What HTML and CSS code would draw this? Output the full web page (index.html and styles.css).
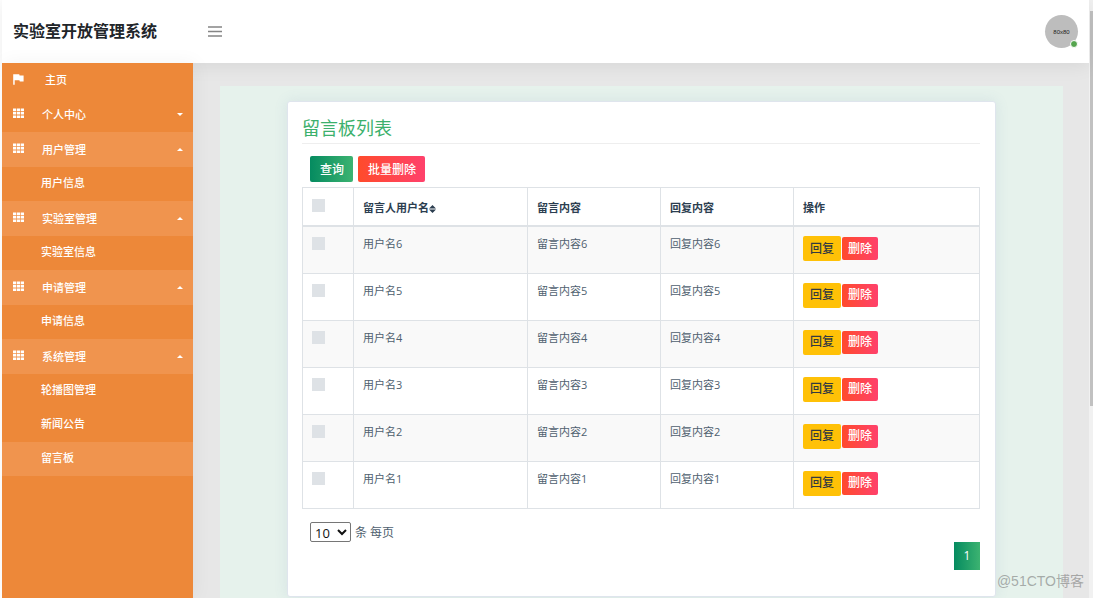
FILE: index.html
```html
<!DOCTYPE html>
<html lang="zh-CN">
<head>
<meta charset="utf-8">
<title>实验室开放管理系统</title>
<link rel="stylesheet" href="styles.css">
</head>
<body>
<svg class="defs" width="0" height="0" aria-hidden="true">
  <symbol id="grid" viewBox="0 0 11 10"><path d="M0 0h3.200v2.700H0zM3.900 0h3.200v2.700H3.900zM7.800 0H11v2.700H7.800zM0 3.400h3.200v2.700H0zM3.900 3.400h3.200v2.700H3.900zM7.800 3.400H11v2.700H7.800zM0 6.900h3.200v2.700H0zM3.900 6.900h3.200v2.700H3.900zM7.800 6.900H11v2.700H7.800z"/></symbol>
  <symbol id="flag" viewBox="0 0 11 11"><path d="M.2.300h6l.4 1.100h4v6H6.800l-.4-1.100H1.700v4.400H.2z"/></symbol>
  <symbol id="down" viewBox="0 0 6 3"><path d="M0 0h6L3 3z"/></symbol>
  <symbol id="up" viewBox="0 0 6 3"><path d="M0 3h6L3 0z"/></symbol>
</svg>
<div class="app">
  <header class="topbar">
    <h1 class="brand">实验室开放管理系统</h1>
    <button class="menu-toggle" type="button" aria-label="菜单"><svg width="14" height="11" viewBox="0 0 14 11"><path d="M0 1h14M0 5.500h14M0 10h14" stroke="#858585" stroke-width="1.400"/></svg></button>
    <a class="avatar" href="#">80x80<span class="status"></span></a>
  </header>
  <div class="body">
    <nav class="sidebar">
      <a class="item home" href="#"><svg class="icon"><use href="#flag"/></svg><span>主页</span></a>
      <a class="item parent" href="#"><svg class="icon"><use href="#grid"/></svg><span>个人中心</span><svg class="caret"><use href="#down"/></svg></a>
      <a class="item parent open" href="#"><svg class="icon"><use href="#grid"/></svg><span>用户管理</span><svg class="caret"><use href="#up"/></svg></a>
      <a class="item child" href="#">用户信息</a>
      <a class="item parent open" href="#"><svg class="icon"><use href="#grid"/></svg><span>实验室管理</span><svg class="caret"><use href="#up"/></svg></a>
      <a class="item child" href="#">实验室信息</a>
      <a class="item parent open" href="#"><svg class="icon"><use href="#grid"/></svg><span>申请管理</span><svg class="caret"><use href="#up"/></svg></a>
      <a class="item child" href="#">申请信息</a>
      <a class="item parent open" href="#"><svg class="icon"><use href="#grid"/></svg><span>系统管理</span><svg class="caret"><use href="#up"/></svg></a>
      <a class="item child" href="#">轮播图管理</a>
      <a class="item child" href="#">新闻公告</a>
      <a class="item child open" href="#">留言板</a>
    </nav>
    <main class="main">
      <div class="panel">
        <section class="card">
          <h2 class="title">留言板列表</h2>
          <div class="tools">
            <button class="btn green" type="button">查询</button>
            <button class="btn red" type="button">批量删除</button>
          </div>
          <table class="list">
            <colgroup><col class="c-check"><col class="c-user"><col class="c-text"><col class="c-text"><col></colgroup>
            <thead>
              <tr><th><input type="checkbox" aria-label="全选"></th><th>留言人用户名<svg class="sort" viewBox="0 0 7 8"><path d="M0 3.600h7L3.500 0zM0 4.400h7L3.500 8z"/></svg></th><th>留言内容</th><th>回复内容</th><th>操作</th></tr>
            </thead>
            <tbody>
              <tr><td><input type="checkbox" aria-label="选择用户名6"></td><td>用户名6</td><td>留言内容6</td><td>回复内容6</td><td><div class="ops"><button class="op reply" type="button">回复</button><button class="op red" type="button">删除</button></div></td></tr>
              <tr><td><input type="checkbox" aria-label="选择用户名5"></td><td>用户名5</td><td>留言内容5</td><td>回复内容5</td><td><div class="ops"><button class="op reply" type="button">回复</button><button class="op red" type="button">删除</button></div></td></tr>
              <tr><td><input type="checkbox" aria-label="选择用户名4"></td><td>用户名4</td><td>留言内容4</td><td>回复内容4</td><td><div class="ops"><button class="op reply" type="button">回复</button><button class="op red" type="button">删除</button></div></td></tr>
              <tr><td><input type="checkbox" aria-label="选择用户名3"></td><td>用户名3</td><td>留言内容3</td><td>回复内容3</td><td><div class="ops"><button class="op reply" type="button">回复</button><button class="op red" type="button">删除</button></div></td></tr>
              <tr><td><input type="checkbox" aria-label="选择用户名2"></td><td>用户名2</td><td>留言内容2</td><td>回复内容2</td><td><div class="ops"><button class="op reply" type="button">回复</button><button class="op red" type="button">删除</button></div></td></tr>
              <tr><td><input type="checkbox" aria-label="选择用户名1"></td><td>用户名1</td><td>留言内容1</td><td>回复内容1</td><td><div class="ops"><button class="op reply" type="button">回复</button><button class="op red" type="button">删除</button></div></td></tr>
            </tbody>
          </table>
          <div class="page-size"><select id="size"><option>10</option><option>20</option></select><label for="size">条 每页</label></div>
          <div class="pager"><button class="page" type="button">1</button></div>
        </section>
      </div>
    </main>
  </div>
</div>
<div class="scroll"><div class="thumb"></div></div>
<div class="watermark">@51CTO博客</div>
</body>
</html>
```
FILE: styles.css
```css
* { box-sizing: border-box; }
body {
  margin: 0;
  padding-left: 2px;
  min-height: 100vh;
  display: flex;
  background: #fff;
  color: #4f5f6f;
  font: 11px/18px "Open Sans", "Noto Sans CJK SC", sans-serif;
}
button, select, input { font: inherit; margin: 0; }
button { border: 0; cursor: pointer; }
a { color: inherit; text-decoration: none; }
.defs { position: absolute; }
.app { flex: 1; display: flex; flex-direction: column; min-width: 0; }
.topbar {
  position: relative;
  z-index: 1;
  display: flex;
  align-items: center;
  height: 63px;
  padding: 0 11px;
  background: #fff;
  box-shadow: 0 2px 18px rgba(0, 0, 0, .08);
}
.brand { margin: 0; padding-bottom: 2px; width: 195px; font-size: 16px; line-height: 24px; color: #212529; }
.menu-toggle { display: flex; padding: 0; background: none; }
.avatar {
  position: relative;
  display: flex;
  align-items: center;
  justify-content: center;
  margin-left: auto;
  width: 33px;
  height: 33px;
  border-radius: 50%;
  background: #bdbdbd;
  color: #222;
  font: 6px/8px "Liberation Sans", sans-serif;
}
.status {
  position: absolute;
  right: 0;
  bottom: 0;
  width: 8px;
  height: 8px;
  border: 1px solid #fff;
  border-radius: 50%;
  background: #55a54e;
}
.body { flex: 1; display: flex; }
.sidebar { position: relative; z-index: 2; width: 191px; background: #ed8839; color: #fff; font-weight: 500; box-shadow: 2px 0 18px rgba(0, 0, 0, .05); }
.item { display: flex; align-items: center; height: 34px; padding: 0 10px 0 11px; }
.parent { height: 35px; }
.open { background: #f0944e; }
.icon { width: 11px; height: 11px; margin: 0 18px 2px 0; fill: #fff; }
.home .icon { margin-right: 21px; }
.caret { width: 6px; height: 3px; margin-left: auto; fill: #fff; }
.child { padding: 0 10px 2px 39px; }
.main { flex: 1; display: flex; min-width: 0; padding: 23px 26px 0 27px; background: #e7e7e7; }
.panel { flex: 1; min-width: 0; padding: 15px 67px 1px; background: #e6f2ec; }
.card {
  padding: 14px 15px 26px 14px;
  border: 1px solid #dfe5ed;
  border-radius: 3px;
  background: #fff;
  box-shadow: 0 0 14px rgba(90, 120, 170, .12);
}
.title { margin: 0 0 12px; padding-bottom: 3px; border-bottom: 1px solid #eee; font-size: 18px; line-height: 24px; font-weight: 400; color: #3cb06c; }
.tools { display: flex; gap: 5px; margin-bottom: 5px; padding-left: 8px; }
.btn { height: 26px; padding: 1px 9px 0 10px; border-radius: 2px; color: #fff; font-size: 12px; font-weight: 500; }
.green, .page { background: linear-gradient(90deg, #058b60, #3cb371); }
.red { background: linear-gradient(90deg, #ff4b2b, #ff416c); }
.list { width: 100%; table-layout: fixed; border-collapse: collapse; }
.c-check { width: 51px; }
.c-user { width: 174px; }
.c-text { width: 133px; }
.list th, .list td { height: 47px; padding: 8px 9px; border: 1px solid #dee2e6; text-align: left; vertical-align: top; }
.list th { height: 38px; padding-top: 11px; border-bottom-width: 2px; color: #2c3e50; font-weight: 700; }
.list tbody tr:nth-child(odd) { background: #f9f9f9; }
.list input { display: block; appearance: none; width: 13px; height: 13px; margin-top: 2px; background: #dee2e6; }
.list th input { margin-top: 0; }
.sort { width: 7px; height: 8px; vertical-align: -1px; fill: #2c3e50; }
.ops { display: flex; align-items: center; gap: 1px; padding-top: 1px; }
.op { height: 23px; padding: 0 6px; border-radius: 2px; color: #fff; font-size: 12px; font-weight: 500; }
.op.reply { height: 25px; padding: 0 7px; background: #ffc107; color: #343a40; }
.page-size { display: flex; align-items: center; gap: 4px; margin-top: 13px; padding-left: 8px; font-size: 12px; }
.page-size label { padding-top: 2px; }
.page-size select { width: 41px; height: 20px; padding: 0; border: 1px solid #767676; border-radius: 2px; background: #fff; color: #111; font-size: 13px; }
.pager { display: flex; justify-content: flex-end; }
.page { width: 26px; height: 28px; color: #fff; font-size: 12px; }
.scroll { width: 4px; padding: 11px 0 0 1px; background: #f1f1f1; }
.thumb { height: 395px; background: #c1c1c1; }
.watermark { position: absolute; z-index: 3; right: 9px; bottom: 7px; color: rgba(100, 100, 100, .5); font: 14px/20px "Liberation Sans", "Noto Sans CJK SC", sans-serif; }
```
